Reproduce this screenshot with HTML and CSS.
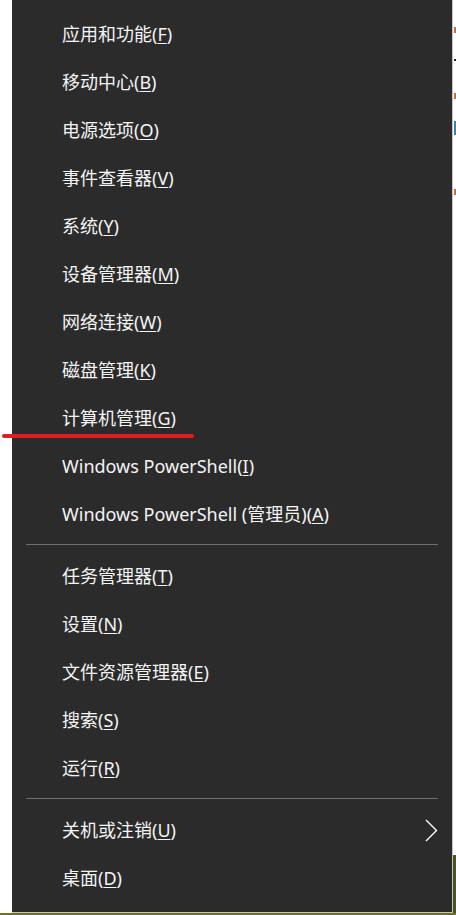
FILE: index.html
```html
<!DOCTYPE html>
<html lang="zh-CN">
<head>
<meta charset="utf-8">
<title>Win+X 菜单</title>
<link rel="stylesheet" href="styles.css">
</head>
<body>
<div class="page">
  <div class="left-gap"></div>
  <div class="menu">
    <div class="item">应用和功能(<u>F</u>)</div>
    <div class="item">移动中心(<u>B</u>)</div>
    <div class="item">电源选项(<u>O</u>)</div>
    <div class="item">事件查看器(<u>V</u>)</div>
    <div class="item">系统(<u>Y</u>)</div>
    <div class="item">设备管理器(<u>M</u>)</div>
    <div class="item">网络连接(<u>W</u>)</div>
    <div class="item">磁盘管理(<u>K</u>)</div>
    <div class="item">计算机管理(<u>G</u>)</div>
    <div class="item">Windows PowerShell(<u>I</u>)</div>
    <div class="item">Windows PowerShell (管理员)(<u>A</u>)</div>
    <div class="sep"></div>
    <div class="item">任务管理器(<u>T</u>)</div>
    <div class="item">设置(<u>N</u>)</div>
    <div class="item">文件资源管理器(<u>E</u>)</div>
    <div class="item">搜索(<u>S</u>)</div>
    <div class="item">运行(<u>R</u>)</div>
    <div class="sep"></div>
    <div class="item sub"><span>关机或注销(<u>U</u>)</span>
      <svg class="chev" width="13" height="23" viewBox="0 0 13 23"><polyline points="1,1 11.5,11.5 1,22" fill="none" stroke="#ffffff" stroke-width="1.4"/></svg>
    </div>
    <div class="item">桌面(<u>D</u>)</div>
  </div>
  <div class="right-strip">
    <div class="strip-top">
      <i class="mk m1"></i><i class="mk m2"></i><i class="mk m3"></i><i class="mk m4"></i><i class="mk m5"></i>
    </div>
    <div class="strip-bottom"></div>
  </div>
</div>
<div class="bottom-strip"></div>
<div class="red-mark"></div>
</body>
</html>
```

FILE: styles.css
```css
html, body {
  margin: 0;
  padding: 0;
  background: #ffffff;
}
body {
  width: 456px;
  height: 915px;
  overflow: hidden;
  position: relative;
  font-family: "Noto Sans", "Noto Sans CJK SC", sans-serif;
}
.page {
  display: flex;
  height: 913px;
}
.left-gap {
  width: 12px;
  flex: none;
  background: #ffffff;
}
.menu {
  width: 441px;
  flex: none;
  background: #2b2b2b;
  border-right: 1px solid #c4c4c4;
  border-bottom: 1px solid #c4c4c4;
  padding: 10px 0 10px;
  box-sizing: border-box;
  color: #f4f4f4;
  font-size: 18px;
}
.item {
  height: 48px;
  line-height: 48px;
  padding-left: 50px;
  white-space: nowrap;
}
.item u {
  text-decoration: underline;
  text-underline-offset: 2px;
  text-decoration-thickness: 1px;
}
.sub {
  display: flex;
  align-items: center;
  justify-content: space-between;
  padding-right: 14px;
}
.chev {
  display: block;
}
.sep {
  height: 1px;
  margin: 6px 14px 7px;
  background: #6e6e6e;
}
.right-strip {
  flex: 1;
  display: flex;
  flex-direction: column;
}
.strip-top {
  height: 855px;
  display: flex;
  flex-direction: column;
  background: #ffffff;
}
.strip-bottom {
  flex: 1;
  background: #4a5519;
}
.mk {
  display: block;
  width: 2px;
  margin-left: 1px;
}
.m1 { height: 6px; margin-top: 27px; background: #c86a3c; }
.m2 { height: 2px; margin-top: 26px; background: #222222; }
.m3 { height: 6px; margin-top: 32px; background: #c86a3c; }
.m4 { height: 14px; margin-top: 22px; background: #2f8aa0; }
.m5 { height: 6px; margin-top: 54px; background: #c86a3c; }
.bottom-strip {
  height: 2px;
  background: #6b7230;
}
.red-mark {
  position: absolute;
  left: 2px;
  top: 434px;
  width: 192px;
  height: 4px;
  border-radius: 2px;
  background: #e01e22;
}
```
